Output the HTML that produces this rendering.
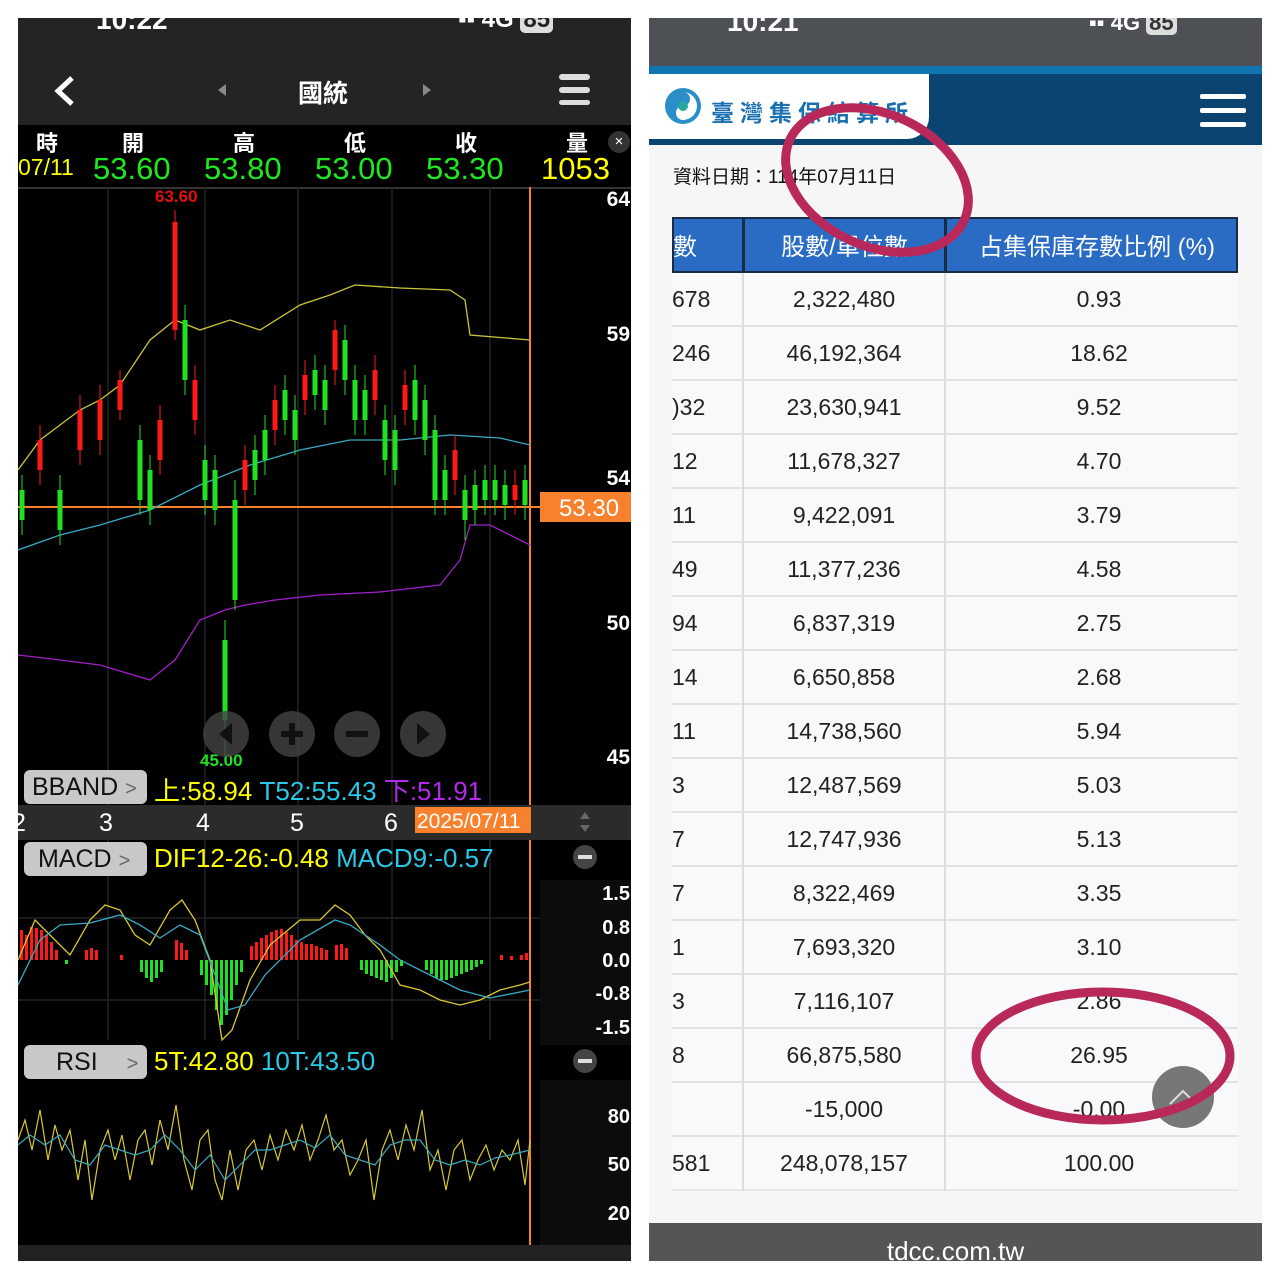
<!DOCTYPE html>
<html><head><meta charset="utf-8"><style>
*{margin:0;padding:0;box-sizing:border-box}
body{width:1280px;height:1280px;background:#fff;position:relative;overflow:hidden;font-family:"Liberation Sans","Noto Sans CJK TC",sans-serif}
.a{position:absolute}
.L{left:18px;top:18px;width:613px;height:1243px;background:#000;overflow:hidden}
.R{left:649px;top:18px;width:613px;height:1243px;background:#f6f6f6;overflow:hidden}
.tb{font-size:22px;color:#fff;font-weight:bold}
.pill{background:#c8c8c8;border-radius:6px;color:#111;font-size:25px;height:34px;line-height:34px;padding-left:8px}
.row{position:absolute;left:23px;width:566px;height:54px;border-bottom:2px solid #e2e2e2;font-size:23px;color:#222;background:#f9f9fb}
.row div{position:absolute;top:0;height:52px;line-height:52px}
.row div:nth-child(3){left:281px!important}
</style></head><body>
<div class="a L">
 <div class="a" style="left:0;top:0;width:613px;height:107px;background:#222426"></div>
 <div class="a tb" style="left:78px;top:-14px;font-size:28px">10:22</div>
 <div class="a tb" style="left:440px;top:-12px;font-size:24px">▪▪ 4G <span style="background:#ddd;color:#222;border-radius:5px;padding:0 3px">85</span></div>
 <svg class="a" style="left:0;top:0" width="613" height="107"><path d="M54 60 L40 73 L54 86" stroke="#fff" stroke-width="5" fill="none"/><path d="M200 72l8-6v12z" fill="#888"/><path d="M405 66l8 6-8 6z" fill="#888"/><rect x="541" y="56" width="31" height="6" rx="3" fill="#ddd"/><rect x="541" y="69" width="31" height="6" rx="3" fill="#ddd"/><rect x="541" y="82" width="31" height="5" rx="2.5" fill="#ddd"/></svg>
 <div class="a tb" style="left:280px;top:56px;font-size:25px">國統</div>
 <div class="a" style="left:0;top:107px;width:613px;height:62px;background:#000"></div>
 <div class="a tb" style="left:18px;top:108px">時</div><div class="a tb" style="left:104px;top:108px">開</div><div class="a tb" style="left:215px;top:108px">高</div><div class="a tb" style="left:326px;top:108px">低</div><div class="a tb" style="left:437px;top:108px">收</div><div class="a tb" style="left:548px;top:108px">量</div>
 <div class="a" style="left:590px;top:113px;width:22px;height:22px;border-radius:11px;background:#333;color:#fff;font-size:15px;text-align:center;line-height:22px">×</div>
 <div class="a" style="left:0;top:136px;font-size:23px;color:#ff0">07/11</div>
 <div class="a" style="left:75px;top:133px;font-size:31px;color:#1ee81e">53.60</div>
 <div class="a" style="left:186px;top:133px;font-size:31px;color:#1ee81e">53.80</div>
 <div class="a" style="left:297px;top:133px;font-size:31px;color:#1ee81e">53.00</div>
 <div class="a" style="left:408px;top:133px;font-size:31px;color:#1ee81e">53.30</div>
 <div class="a" style="left:523px;top:133px;font-size:31px;color:#ff0">1053</div>
 <svg class="a" style="left:0;top:0" width="613" height="1243">
  <g transform="translate(-18,-18)">
  <rect x="18" y="187" width="613" height="2" fill="#333"/>
  <g stroke="#222" stroke-width="1.5"><path d="M108 187V805M205 187V805M298 187V805M392 187V805M490 187V805M108 840V1040M205 840V1040M298 840V1040M392 840V1040M490 840V1040M18 918H540M18 1000H540"/></g>
  <path d="M18 507H540" stroke="#f7812c" stroke-width="2"/>
  <path d="M530 187V1245" stroke="#f7812c" stroke-width="2"/>
  <polyline fill="none" stroke="#cbc33a" stroke-width="1.3" points="18,470 40,440 80,410 100,400 120,385 150,340 175,320 200,330 230,320 260,330 300,305 330,295 355,285 400,288 450,290 465,300 470,335 530,340"/>
  <polyline fill="none" stroke="#3aa9c4" stroke-width="1.3" points="18,550 60,535 100,525 150,510 200,485 250,465 300,450 350,440 400,440 450,435 500,438 530,445"/>
  <polyline fill="none" stroke="#a020c8" stroke-width="1.3" points="18,655 60,660 100,665 150,680 175,660 200,620 225,610 245,605 275,600 320,595 380,592 440,585 460,560 470,525 490,525 530,545"/>
  <g stroke="#ff1a1a"><path stroke-width="1" d="M40 425V485M80 395V465M100 385V455M120 370V420M160 405V475M175 210V340M195 365V435M245 445V505M275 385V445M305 360V415M335 320V385M375 355V415M405 370V425M455 435V495M515 470V515"/>
  <path stroke-width="5" d="M40 440V470M80 410V450M100 400V440M120 380V410M160 420V460M175 222V330M195 380V420M245 460V490M275 400V430M305 375V400M335 330V370M375 370V400M405 385V410M455 450V480M515 485V500"/></g>
  <g stroke="#22e022"><path stroke-width="1" d="M22 475V535M60 475V545M140 425V515M150 455V525M185 305V395M205 445V515M215 455V525M225 620V760M235 480V610M255 435V495M265 415V475M285 375V435M295 395V455M315 355V410M325 365V425M345 325V395M355 365V435M365 375V435M385 405V475M395 415V485M415 365V435M425 385V455M435 415V515M445 455V515M465 475V540M475 470V525M485 465V515M495 465V515M505 470V520M525 465V520"/>
  <path stroke-width="5" d="M22 490V520M60 490V530M140 440V500M150 470V510M185 320V380M205 460V500M215 470V510M225 640V720M235 500V600M255 450V480M265 430V460M285 390V420M295 410V440M315 370V395M325 380V410M345 340V380M355 380V420M365 390V420M385 420V460M395 430V470M415 380V420M425 400V440M435 430V500M445 470V500M465 490V520M475 485V510M485 480V500M495 480V500M505 485V505M525 480V505"/></g>
  <text x="155" y="202" fill="#e01010" font-size="17" font-weight="bold">63.60</text>
  <text x="200" y="766" fill="#22e022" font-size="17" font-weight="bold">45.00</text>
  <g fill="#444" opacity=".8"><circle cx="226" cy="734" r="23"/><circle cx="292" cy="734" r="23"/><circle cx="357" cy="734" r="23"/><circle cx="423" cy="734" r="23"/></g>
  <g fill="#111"><rect x="281" y="731" width="22" height="6"/><rect x="289" y="723" width="6" height="22"/><rect x="346" y="731" width="22" height="6"/><path d="M232 723l-13 11 13 11zM417 723l13 11-13 11z"/></g>
  <g fill="#fff" font-size="21" font-weight="bold" text-anchor="end"><text x="630" y="206">64</text><text x="630" y="341">59</text><text x="630" y="485">54</text><text x="630" y="630">50</text><text x="630" y="764">45</text></g>
  <rect x="540" y="492" width="91" height="30" fill="#f7812c"/><text x="559" y="516" fill="#fff" font-size="24">53.30</text>
  <rect x="18" y="805" width="613" height="35" fill="#2b2b2b"/>
  <g fill="#fff" font-size="25"><text x="12" y="831">2</text><text x="99" y="831">3</text><text x="196" y="831">4</text><text x="290" y="831">5</text><text x="384" y="831">6</text></g>
  <rect x="415" y="807" width="116" height="26" fill="#f7812c"/><text x="417" y="828" fill="#fff" font-size="21">2025/07/11</text>
  <path d="M580 819l5-7 5 7zM580 825l5 7 5-7z" fill="#666"/>
  <g fill="#444"><circle cx="585" cy="857" r="12"/><circle cx="585" cy="1061" r="12"/></g><g fill="#ddd"><rect x="578" y="855" width="14" height="4"/><rect x="578" y="1059" width="14" height="4"/></g>
  <g fill="#ff1a1a"><rect x="20" y="930" width="3" height="30"/><rect x="25" y="935" width="3" height="25"/><rect x="30" y="927" width="3" height="33"/><rect x="35" y="928" width="3" height="32"/><rect x="40" y="930" width="3" height="30"/><rect x="45" y="935" width="3" height="25"/><rect x="50" y="942" width="3" height="18"/><rect x="55" y="950" width="3" height="10"/><rect x="85" y="950" width="3" height="10"/><rect x="90" y="948" width="3" height="12"/><rect x="95" y="950" width="3" height="10"/><rect x="120" y="955" width="3" height="5"/><rect x="175" y="940" width="3" height="20"/><rect x="180" y="943" width="3" height="17"/><rect x="185" y="950" width="3" height="10"/><rect x="250" y="946" width="3" height="14"/><rect x="255" y="942" width="3" height="18"/><rect x="260" y="938" width="3" height="22"/><rect x="265" y="935" width="3" height="25"/><rect x="270" y="932" width="3" height="28"/><rect x="275" y="930" width="3" height="30"/><rect x="280" y="929" width="3" height="31"/><rect x="285" y="932" width="3" height="28"/><rect x="290" y="935" width="3" height="25"/><rect x="295" y="940" width="3" height="20"/><rect x="300" y="942" width="3" height="18"/><rect x="305" y="944" width="3" height="16"/><rect x="310" y="944" width="3" height="16"/><rect x="315" y="946" width="3" height="14"/><rect x="320" y="948" width="3" height="12"/><rect x="325" y="950" width="3" height="10"/><rect x="335" y="945" width="3" height="15"/><rect x="340" y="944" width="3" height="16"/><rect x="345" y="948" width="3" height="12"/><rect x="500" y="955" width="3" height="5"/><rect x="510" y="956" width="3" height="4"/><rect x="520" y="955" width="3" height="5"/><rect x="525" y="953" width="3" height="7"/></g>
  <g fill="#22e022"><rect x="65" y="960" width="3" height="4"/><rect x="140" y="960" width="3" height="12"/><rect x="145" y="960" width="3" height="18"/><rect x="150" y="960" width="3" height="22"/><rect x="155" y="960" width="3" height="18"/><rect x="160" y="960" width="3" height="12"/><rect x="200" y="960" width="3" height="15"/><rect x="205" y="960" width="3" height="25"/><rect x="210" y="960" width="3" height="35"/><rect x="215" y="960" width="3" height="50"/><rect x="220" y="960" width="3" height="65"/><rect x="225" y="960" width="3" height="55"/><rect x="230" y="960" width="3" height="40"/><rect x="235" y="960" width="3" height="25"/><rect x="240" y="960" width="3" height="12"/><rect x="360" y="960" width="3" height="10"/><rect x="365" y="960" width="3" height="14"/><rect x="370" y="960" width="3" height="16"/><rect x="375" y="960" width="3" height="18"/><rect x="380" y="960" width="3" height="20"/><rect x="385" y="960" width="3" height="22"/><rect x="390" y="960" width="3" height="18"/><rect x="395" y="960" width="3" height="12"/><rect x="400" y="960" width="3" height="6"/><rect x="425" y="960" width="3" height="10"/><rect x="430" y="960" width="3" height="14"/><rect x="435" y="960" width="3" height="18"/><rect x="440" y="960" width="3" height="20"/><rect x="445" y="960" width="3" height="20"/><rect x="450" y="960" width="3" height="18"/><rect x="455" y="960" width="3" height="16"/><rect x="460" y="960" width="3" height="14"/><rect x="465" y="960" width="3" height="12"/><rect x="470" y="960" width="3" height="10"/><rect x="475" y="960" width="3" height="7"/><rect x="480" y="960" width="3" height="4"/></g>
  <polyline fill="none" stroke="#d8c830" stroke-width="1.3" points="18,960 35,920 50,935 70,955 90,920 105,905 120,910 135,935 150,945 170,910 182,900 195,920 210,960 222,1040 232,1030 250,980 270,945 300,920 320,920 335,905 350,915 365,935 380,950 400,985 420,990 440,1000 460,1005 480,1000 500,990 520,985 530,982"/>
  <polyline fill="none" stroke="#3aa9c4" stroke-width="1.3" points="18,985 40,940 60,925 90,923 120,915 140,925 160,938 180,925 200,935 215,975 228,1010 245,1005 265,975 300,940 335,920 350,925 380,945 400,960 430,975 460,990 490,998 530,990"/>
  <rect x="540" y="880" width="91" height="165" fill="#0c0c0c"/>
  <g fill="#fff" font-size="20" font-weight="bold" text-anchor="end"><text x="630" y="900">1.5</text><text x="630" y="934">0.8</text><text x="630" y="967">0.0</text><text x="630" y="1000">-0.8</text><text x="630" y="1034">-1.5</text></g>
  <polyline fill="none" stroke="#d8c830" stroke-width="1.2" points="18,1140 25,1120 32,1150 40,1110 48,1160 55,1125 62,1150 70,1130 78,1180 85,1140 92,1200 100,1150 108,1130 115,1160 122,1135 130,1180 138,1140 145,1130 152,1165 160,1120 168,1150 176,1105 184,1160 192,1190 200,1140 208,1130 215,1180 222,1200 230,1150 238,1190 246,1150 254,1140 262,1170 270,1135 278,1160 286,1130 294,1150 302,1125 310,1160 318,1140 326,1115 334,1150 342,1140 350,1175 358,1160 366,1140 374,1200 382,1150 390,1130 398,1160 406,1125 414,1150 422,1110 430,1170 438,1150 446,1190 454,1150 462,1140 470,1180 478,1160 486,1145 494,1170 502,1150 510,1160 518,1140 525,1185 530,1140"/>
  <polyline fill="none" stroke="#3aa9c4" stroke-width="1.2" points="18,1145 30,1135 45,1145 60,1135 75,1160 90,1165 105,1145 120,1150 135,1155 150,1150 165,1135 180,1150 195,1170 210,1155 225,1180 240,1165 255,1150 270,1150 285,1145 300,1140 315,1148 330,1135 345,1155 360,1160 375,1165 390,1145 405,1140 420,1140 435,1160 450,1165 465,1160 480,1165 495,1158 510,1155 530,1150"/>
  <rect x="540" y="1080" width="91" height="165" fill="#0c0c0c"/>
  <g fill="#fff" font-size="20" font-weight="bold" text-anchor="end"><text x="630" y="1123">80</text><text x="630" y="1171">50</text><text x="630" y="1220">20</text></g>
  </g>
 </svg>
 <div class="a pill" style="left:6px;top:752px;width:123px">BBAND <span style="color:#666;font-size:20px">&gt;</span></div>
 <div class="a" style="left:136px;top:753px;font-size:26px;color:#ff0;white-space:nowrap">上:58.94<span style="color:#29c7e8"> T52:55.43</span><span style="color:#b02ae8"> 下:51.91</span></div>
 <div class="a pill" style="left:6px;top:824px;width:123px;padding-left:14px">MACD <span style="color:#666;font-size:20px">&gt;</span></div>
 <div class="a" style="left:136px;top:825px;font-size:26px;color:#ff0;white-space:nowrap">DIF12-26:-0.48<span style="color:#29c7e8"> MACD9:-0.57</span></div>
 <div class="a pill" style="left:6px;top:1027px;width:123px;padding-left:32px">RSI <span style="color:#666;font-size:20px;margin-left:22px">&gt;</span></div>
 <div class="a" style="left:136px;top:1028px;font-size:26px;color:#ff0;white-space:nowrap">5T:42.80<span style="color:#29c7e8"> 10T:43.50</span></div>
 <div class="a" style="left:0;top:1227px;width:613px;height:16px;background:#222"></div>
</div>

<div class="a R">
 <div class="a" style="left:0;top:0;width:613px;height:48px;background:#4d5055"></div>
 <div class="a tb" style="left:78px;top:-12px;font-size:28px">10:21</div>
 <div class="a tb" style="left:440px;top:-8px;font-size:22px">▪▪ 4G <span style="background:#ddd;color:#333;border-radius:5px;padding:0 3px">85</span></div>
 <div class="a" style="left:0;top:48px;width:613px;height:8px;background:#0f74b0"></div>
 <div class="a" style="left:0;top:56px;width:613px;height:71px;background:#0b4470"></div>
 <div class="a" style="left:0;top:56px;width:280px;height:65px;background:#fff;border-bottom-right-radius:22px"></div>
 <svg class="a" style="left:14px;top:68px" width="40" height="40"><circle cx="20" cy="20" r="18" fill="#2a8fc8"/><path d="M20 6a14 14 0 0 1 0 28a7 7 0 0 1 0-14a7 7 0 0 0 0-14z" fill="#fff"/><circle cx="20" cy="20" r="5" fill="#2aa6a0"/></svg>
 <div class="a" style="left:62px;top:76px;font-size:23px;color:#1a6fb0;letter-spacing:6px;font-weight:bold">臺灣集保結算所</div>
 <div class="a" style="left:551px;top:76px;width:46px;height:5px;background:#fff;border-radius:2px"></div>
 <div class="a" style="left:551px;top:90px;width:46px;height:5px;background:#fff;border-radius:2px"></div>
 <div class="a" style="left:551px;top:104px;width:46px;height:5px;background:#fff;border-radius:2px"></div>
 <div class="a" style="left:24px;top:144px;font-size:19px;color:#111">資料日期：114年07月11日</div>
 <div class="a" style="left:23px;top:199px;width:566px;height:56px;background:#2a6cc4;border:2px solid #1a2b44"></div>
 <div class="a" style="left:93px;top:199px;width:3px;height:56px;background:#1a2b44"></div>
 <div class="a" style="left:295px;top:199px;width:3px;height:56px;background:#1a2b44"></div>
 <div class="a" style="left:24px;top:209px;font-size:24px;color:#fff">數</div>
 <div class="a" style="left:96px;top:209px;width:199px;text-align:center;font-size:24px;color:#fff">股數/單位數</div>
 <div class="a" style="left:298px;top:209px;width:300px;text-align:center;font-size:24px;color:#fff">占集保庫存數比例 (%)</div>
 <div class="row" style="top:255px"><div style="left:0">678</div><div style="left:72px;width:200px;text-align:center">2,322,480</div><div style="left:274px;width:292px;text-align:center">0.93</div></div>
 <div class="row" style="top:309px"><div style="left:0">246</div><div style="left:72px;width:200px;text-align:center">46,192,364</div><div style="left:274px;width:292px;text-align:center">18.62</div></div>
 <div class="row" style="top:363px"><div style="left:0">)32</div><div style="left:72px;width:200px;text-align:center">23,630,941</div><div style="left:274px;width:292px;text-align:center">9.52</div></div>
 <div class="row" style="top:417px"><div style="left:0">12</div><div style="left:72px;width:200px;text-align:center">11,678,327</div><div style="left:274px;width:292px;text-align:center">4.70</div></div>
 <div class="row" style="top:471px"><div style="left:0">11</div><div style="left:72px;width:200px;text-align:center">9,422,091</div><div style="left:274px;width:292px;text-align:center">3.79</div></div>
 <div class="row" style="top:525px"><div style="left:0">49</div><div style="left:72px;width:200px;text-align:center">11,377,236</div><div style="left:274px;width:292px;text-align:center">4.58</div></div>
 <div class="row" style="top:579px"><div style="left:0">94</div><div style="left:72px;width:200px;text-align:center">6,837,319</div><div style="left:274px;width:292px;text-align:center">2.75</div></div>
 <div class="row" style="top:633px"><div style="left:0">14</div><div style="left:72px;width:200px;text-align:center">6,650,858</div><div style="left:274px;width:292px;text-align:center">2.68</div></div>
 <div class="row" style="top:687px"><div style="left:0">11</div><div style="left:72px;width:200px;text-align:center">14,738,560</div><div style="left:274px;width:292px;text-align:center">5.94</div></div>
 <div class="row" style="top:741px"><div style="left:0">3</div><div style="left:72px;width:200px;text-align:center">12,487,569</div><div style="left:274px;width:292px;text-align:center">5.03</div></div>
 <div class="row" style="top:795px"><div style="left:0">7</div><div style="left:72px;width:200px;text-align:center">12,747,936</div><div style="left:274px;width:292px;text-align:center">5.13</div></div>
 <div class="row" style="top:849px"><div style="left:0">7</div><div style="left:72px;width:200px;text-align:center">8,322,469</div><div style="left:274px;width:292px;text-align:center">3.35</div></div>
 <div class="row" style="top:903px"><div style="left:0">1</div><div style="left:72px;width:200px;text-align:center">7,693,320</div><div style="left:274px;width:292px;text-align:center">3.10</div></div>
 <div class="row" style="top:957px"><div style="left:0">3</div><div style="left:72px;width:200px;text-align:center">7,116,107</div><div style="left:274px;width:292px;text-align:center">2.86</div></div>
 <div class="row" style="top:1011px"><div style="left:0">8</div><div style="left:72px;width:200px;text-align:center">66,875,580</div><div style="left:274px;width:292px;text-align:center">26.95</div></div>
 <div class="row" style="top:1065px"><div style="left:0"></div><div style="left:72px;width:200px;text-align:center">-15,000</div><div style="left:274px;width:292px;text-align:center">-0.00</div></div>
 <div class="row" style="top:1119px;border-bottom:2px solid #e8e8e8"><div style="left:0">581</div><div style="left:72px;width:200px;text-align:center">248,078,157</div><div style="left:274px;width:292px;text-align:center">100.00</div></div>
 <div class="a" style="left:93px;top:255px;width:2px;height:918px;background:#ddd"></div>
 <div class="a" style="left:295px;top:255px;width:2px;height:918px;background:#ddd"></div>
 <div class="a" style="left:503px;top:1048px;width:62px;height:62px;border-radius:31px;background:#777"></div>
 <svg class="a" style="left:503px;top:1048px" width="62" height="62"><path d="M18 38L31 25L44 38" stroke="#ddd" stroke-width="2" fill="none"/></svg>
 <svg class="a" style="left:0;top:0" width="613" height="1243"><ellipse cx="228" cy="162" rx="96" ry="66" transform="rotate(25 228 162)" fill="none" stroke="#b8295a" stroke-width="9"/><ellipse cx="454" cy="1038" rx="127" ry="64" fill="none" stroke="#b8295a" stroke-width="9"/></svg>
 <div class="a" style="left:0;top:1205px;width:613px;height:38px;background:#555"></div>
 <div class="a" style="left:0;top:1218px;width:613px;text-align:center;color:#fff;font-size:26px">tdcc.com.tw</div>
</div>
</body></html>
